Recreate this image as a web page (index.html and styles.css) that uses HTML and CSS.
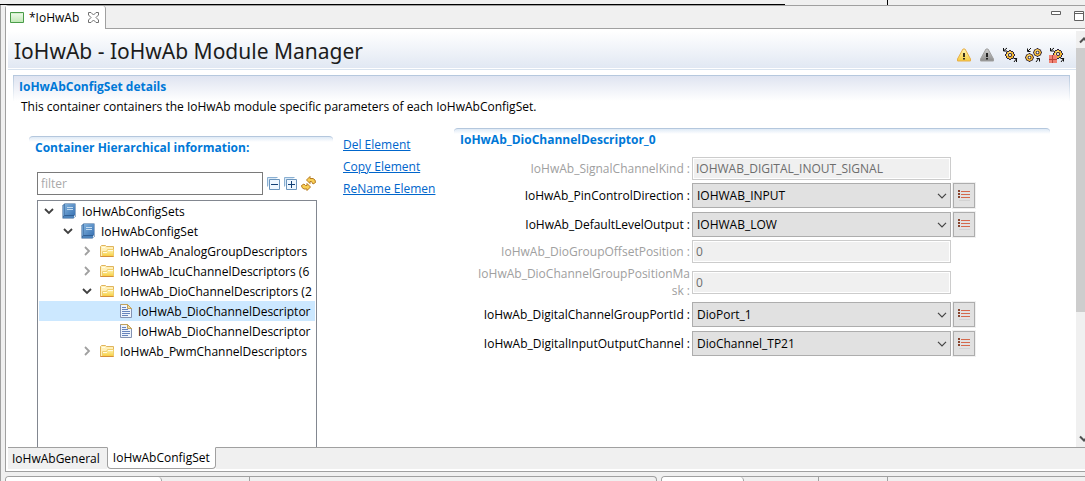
FILE: index.html
```html
<!DOCTYPE html>
<html lang="en">
<head>
<meta charset="utf-8">
<title>IoHwAb - IoHwAb Module Manager</title>
<link rel="stylesheet" href="styles.css">
</head>
<body>
<svg class="defs" width="0" height="0" aria-hidden="true">
  <defs>
    <linearGradient id="gold" x2="0" y2="1"><stop offset="0" stop-color="#fff6b8"/><stop offset="1" stop-color="#f6cc3c"/></linearGradient>
    <linearGradient id="grey" x2="0" y2="1"><stop offset="0" stop-color="#d0d0d0"/><stop offset="1" stop-color="#8c8c8c"/></linearGradient>
    <linearGradient id="blue" x2="1" y2="1"><stop offset="0" stop-color="#7fb0dc"/><stop offset="1" stop-color="#3b74b4"/></linearGradient>
    <linearGradient id="green" x2="0" y2="1"><stop offset="0" stop-color="#f3fbef"/><stop offset="1" stop-color="#bfe8b4"/></linearGradient>
    <symbol id="gear" viewBox="0 0 10 10">
      <path d="M4 0h2v1h2v1h1v2h1v2H9v2H8v1H6v1H4V9H2V8H1V6H0V4h1V2h1V1h2z" fill="#2e2440"/>
      <path d="M4 1h2v1h2v2h1v2H8v2H6v1H4V8H2V6H1V4h1V2h2z" fill="#f2b731"/>
      <path d="M3 2h3v1H4v1H3v2H2V4h1z" fill="#ffe27a"/>
      <circle cx="5" cy="5" r="2" fill="#2e2440"/><circle cx="5" cy="5" r="1.100" fill="#fff"/>
    </symbol>
    <symbol id="book" viewBox="0 0 14 16">
      <path d="M2.500.5h11v13l-2 2H.5v-13z" fill="#315f94"/>
      <path d="M3 1h10v11H3z" fill="url(#blue)"/><path d="M1 2.500L2.500 1v11L1 13.500z" fill="#6fa0d0"/>
      <path d="M2 13h10v2H1z" fill="#4d83bb"/><path d="M12 13l1-1v1.500L12 15z" fill="#e6edf4"/>
      <path d="M5 4.500h6M5 6.500h6" stroke="#c5dcf0"/>
    </symbol>
    <symbol id="folder" viewBox="0 0 15 13">
      <path d="M.5 11.500v-10l1-1h4l1 1h7v10z" fill="#fff0b8" stroke="#e0b45c"/>
      <path d="M2.500 11.500v-5h4l1-2h6v7z" fill="url(#gold)" stroke="#f0cf70"/>
      <path d="M.5 11.500h13" stroke="#d58f3c"/>
      <path d="M2 2.500h3M8 5.500h5M3 7.500h4" stroke="#fffbe6"/>
    </symbol>
    <symbol id="file" viewBox="0 0 12 14">
      <path d="M.5.5h7l4 4v9H.5z" fill="#eef4fc" stroke="#8392b2"/>
      <path d="M.5.5h7l4 4" fill="none" stroke="#c3a35b"/><path d="M7.500.5v4h4z" fill="#f3dda0" stroke="#c3a35b"/>
      <path d="M2 3.500h4M2 5.500h6M2 7.500h8M2 9.500h8M2 11.500h6" stroke="#6684bd"/>
    </symbol>
    <symbol id="open" viewBox="0 0 10 10"><path d="M1 3l4 4 4-4" fill="none" stroke="#404040" stroke-width="1.800"/></symbol>
    <symbol id="closed" viewBox="0 0 10 10"><path d="M3 1l4 4-4 4" fill="none" stroke="#a0a0a0" stroke-width="1.800"/></symbol>
    <symbol id="chev" viewBox="0 0 10 6"><path d="M1 .8l4 4 4-4" fill="none" stroke="#444" stroke-width="1.200"/></symbol>
    <symbol id="list" viewBox="0 0 12 11">
      <path d="M0 0h2v2H0zM0 3h2v2H0zM0 6h2v2H0z" fill="#88452f"/><path d="M3 1.500h9M3 4.500h9M3 7.500h9" stroke="#d4694c"/>
      <path d="M1 10.500h11" stroke="#d2d2d2"/>
    </symbol>
  </defs>
</svg>

<div class="top-strip"><span class="top-rule"></span><span class="top-mark"></span></div>
<div class="workbench">
  <main class="editor">
    <div class="tabs">
      <div class="tab">
        <svg width="14" height="11" viewBox="0 0 14 11"><path d="M.5.5h13v10H.5z" fill="url(#green)" stroke="#4a9d49"/><path d="M1.500 1.500h11" stroke="#d5f0cd"/></svg>
        <span>*IoHwAb</span>
        <button class="plain" aria-label="Close"><svg width="11" height="11" viewBox="0 0 11 11"><path d="M.5.5h2.500l2.500 2.500L8 .5h2.500V3L8 5.500 10.500 8v2.500H8L5.500 8 3 10.500H.5V8L3 5.500.5 3z" fill="#fff" stroke="#707070"/></svg></button>
      </div>
      <div class="window-buttons">
        <button class="plain" aria-label="Minimize"><svg width="10" height="10" viewBox="0 0 10 10"><path d="M.5.5h9v3h-9z" fill="#fff" stroke="#606060"/></svg></button>
        <button class="plain" aria-label="Maximize"><svg width="10" height="10" viewBox="0 0 10 10"><path d="M.5.5h9v9h-9zM.5 2.500h9" fill="#fff" stroke="#606060"/></svg></button>
      </div>
    </div>

    <div class="viewport">
      <div class="form">
        <header class="form-head">
          <h1>IoHwAb - IoHwAb Module Manager</h1>
          <div class="tools">
            <button class="plain" aria-label="Warnings"><svg width="16" height="16" viewBox="0 0 16 16"><path d="M7 2h2l5.500 10v2h-13v-2z" fill="url(#gold)" stroke="#e8ae48"/><path d="M7 6h2v4H7zM7 11h2v1.500H7z" fill="#38301c"/></svg></button>
            <button class="plain" aria-label="Ignored warnings"><svg width="16" height="16" viewBox="0 0 16 16"><path d="M7 2h2l5.500 10v2h-13v-2z" fill="url(#grey)" stroke="#a0a0a0"/><path d="M7 6h2v4H7zM7 11h2v1.500H7z" fill="#222"/></svg></button>
            <button class="plain" aria-label="Generate"><svg width="16" height="16" viewBox="0 0 16 16"><use href="#gear" x="3" y="3" width="10" height="10"/><path d="M5 1L2 3.500M1.500 1v3h3.500M15 11l-3 4M11.500 11.500h3v3.500" fill="none" stroke="#111"/></svg></button>
            <button class="plain" aria-label="Generate all"><svg width="17" height="16" viewBox="0 0 17 16"><use href="#gear" x="8" y="1" width="9" height="9"/><use href="#gear" x="0" y="6" width="9" height="9"/><path d="M6 1L3 4M2.500 1.500v3h3M14 11l-3 4M11.500 11.500h3v3" fill="none" stroke="#111"/></svg></button>
            <button class="plain" aria-label="Stop generation"><svg width="16" height="16" viewBox="0 0 16 16"><use href="#gear" x="4" y="2" width="10" height="10"/><path d="M5 1L2 3.500M1.500 1v3h3.500M15 11l-3 4M11.500 11.500h3v3" fill="none" stroke="#111"/><path d="M0 8h8v8H0z" fill="#f08374"/><path d="M3.500 8v8M0 12.500h8" stroke="#b94338"/></svg></button>
          </div>
        </header>

        <section class="outer">
          <h2 class="section-title outer-title">IoHwAbConfigSet details</h2>
          <p class="desc">This container containers the IoHwAb module specific parameters of each IoHwAbConfigSet.</p>
          <div class="columns">
            <section class="left">
              <h3 class="section-title">Container Hierarchical information:</h3>
              <div class="filter-row">
                <input type="text" class="filter" placeholder="filter" aria-label="filter">
                <button class="plain" aria-label="Collapse all"><svg width="13" height="13" viewBox="0 0 13 13"><path d="M.5 9.500v-9h10" fill="#d9e9f7" stroke="#8bb0d2"/><path d="M2.500 2.500h10v10h-10z" fill="#eef7ff" stroke="#6b95bd"/><path d="M4 7.500h7" stroke="#123f75"/></svg></button>
                <button class="plain" aria-label="Expand all"><svg width="13" height="13" viewBox="0 0 13 13"><path d="M.5 9.500v-9h10" fill="#d9e9f7" stroke="#8bb0d2"/><path d="M2.500 2.500h10v10h-10z" fill="#eef7ff" stroke="#6b95bd"/><path d="M4 7.500h7M7.500 4v7" stroke="#123f75"/></svg></button>
                <button class="plain" aria-label="Refresh"><svg width="15" height="15" viewBox="0 0 15 15"><path d="M9 .5L5.500 4 9 7.500V5.500h1.500L12 8l2.500-1.500-.5-2.500-2-1.500H9zM6 14.500L9.500 11 6 7.500v2H4.500L3 8 .5 9.500l.5 2L3 13h3z" fill="#f8cf55" stroke="#b67b22"/></svg></button>
              </div>
              <ul class="tree">
                <li><svg class="tw"><use href="#open"/></svg><svg class="book"><use href="#book"/></svg>IoHwAbConfigSets</li>
                <li class="l1"><svg class="tw"><use href="#open"/></svg><svg class="book"><use href="#book"/></svg>IoHwAbConfigSet</li>
                <li class="l2"><svg class="tw"><use href="#closed"/></svg><svg class="folder"><use href="#folder"/></svg>IoHwAb_AnalogGroupDescriptors</li>
                <li class="l2"><svg class="tw"><use href="#closed"/></svg><svg class="folder"><use href="#folder"/></svg>IoHwAb_IcuChannelDescriptors (6</li>
                <li class="l2"><svg class="tw"><use href="#open"/></svg><svg class="folder"><use href="#folder"/></svg>IoHwAb_DioChannelDescriptors (2</li>
                <li class="l3 selected"><svg class="file"><use href="#file"/></svg>IoHwAb_DioChannelDescriptor</li>
                <li class="l3"><svg class="file"><use href="#file"/></svg>IoHwAb_DioChannelDescriptor</li>
                <li class="l2"><svg class="tw"><use href="#closed"/></svg><svg class="folder"><use href="#folder"/></svg>IoHwAb_PwmChannelDescriptors</li>
              </ul>
            </section>
            <nav class="links">
              <a href="#del">Del Element</a>
              <a href="#copy">Copy Element</a>
              <a href="#rename">ReName Elemen</a>
            </nav>
            <section class="right">
              <h3 class="section-title">IoHwAb_DioChannelDescriptor_0</h3>
              <div class="fields">
                <label class="off" for="kind">IoHwAb_SignalChannelKind :</label>
                <input id="kind" type="text" value="IOHWAB_DIGITAL_INOUT_SIGNAL" disabled>
                <label for="dir">IoHwAb_PinControlDirection :</label>
                <div class="combo"><select id="dir"><option>IOHWAB_INPUT</option></select><svg><use href="#chev"/></svg></div>
                <button class="pick" aria-label="Options for pin control direction"><svg><use href="#list"/></svg></button>
                <label for="level">IoHwAb_DefaultLevelOutput :</label>
                <div class="combo"><select id="level"><option>IOHWAB_LOW</option></select><svg><use href="#chev"/></svg></div>
                <button class="pick" aria-label="Options for default level"><svg><use href="#list"/></svg></button>
                <label class="off" for="offset">IoHwAb_DioGroupOffsetPosition :</label>
                <input id="offset" type="text" value="0" disabled>
                <label class="off" for="mask">IoHwAb_DioChannelGroupPositionMa<br>sk :</label>
                <input id="mask" type="text" value="0" disabled>
                <label for="port">IoHwAb_DigitalChannelGroupPortId :</label>
                <div class="combo"><select id="port"><option>DioPort_1</option></select><svg><use href="#chev"/></svg></div>
                <button class="pick" aria-label="Options for port"><svg><use href="#list"/></svg></button>
                <label for="channel">IoHwAb_DigitalInputOutputChannel :</label>
                <div class="combo"><select id="channel"><option>DioChannel_TP21</option></select><svg><use href="#chev"/></svg></div>
                <button class="pick" aria-label="Options for channel"><svg><use href="#list"/></svg></button>
              </div>
            </section>
          </div>
        </section>
      </div>
      <div class="scrollbar">
        <svg viewBox="0 0 9 17"><path d="M4 11.500l4-4 4 4" fill="none" stroke="#505050" stroke-width="2"/></svg>
        <span class="thumb"></span><span class="track"></span>
        <svg viewBox="0 0 9 17"><path d="M4 6.500l4 4 4-4" fill="none" stroke="#505050" stroke-width="2"/></svg>
      </div>
    </div>

    <div class="pages">
      <button class="page">IoHwAbGeneral</button>
      <button class="page current">IoHwAbConfigSet</button>
      <span class="pages-rest"></span>
    </div>
  </main>
  <div class="lower">
    <div class="panel wide"><span class="ltab on"></span><span class="ltab"></span></div>
    <div class="panel"><span class="ltab on b"></span><span class="ltab c"></span><span class="ltab d"></span></div>
  </div>
</div>
</body>
</html>
```
FILE: styles.css
```css
* { box-sizing: border-box; }
body {
  margin: 0;
  height: 100vh;
  display: flex;
  flex-direction: column;
  overflow: hidden;
  background: #f0f0f0;
  color: #000;
  font: 12px/17px "Open Sans", "Noto Sans", sans-serif;
}
.defs { position: absolute; }
svg { display: block; flex: none; }
button, input, select { font: inherit; color: inherit; margin: 0; }
.plain { border: 0; padding: 0; background: none; display: block; }

.top-strip { display: flex; align-items: flex-end; height: 5px; flex: none; }
.top-rule { width: 785px; height: 1px; background: #000; }
.top-mark { width: 2px; height: 5px; margin-left: 101px; border-right: 1px solid #000; }

.workbench { flex: 1; min-height: 0; display: flex; flex-direction: column; border-left: 1px solid #a0a0a0; padding-left: 4px; }
.editor { flex: 1; min-height: 0; display: flex; flex-direction: column; background: #fff; border: 1px solid #a0a0a0; border-right: 0; border-top-left-radius: 4px; }
.tabs { flex: none; height: 23px; display: flex; justify-content: space-between; background: linear-gradient(#a0a0a0, #a0a0a0) bottom / 100% 1px no-repeat #f0f0f0; }
.tab { display: flex; align-items: center; gap: 5px; width: 100px; padding-left: 4px; background: #fff; border-right: 1px solid #a0a0a0; border-top-right-radius: 3px; }
.tab button { margin-left: 4px; }
.window-buttons { display: flex; align-items: flex-start; gap: 13px; padding: 5px 1px 0 0; }

.viewport { flex: 1; min-height: 0; display: flex; padding: 2px 0 0 2px; }
.form { flex: 1; min-width: 0; display: flex; flex-direction: column; overflow: hidden; }
.form-head { flex: none; display: flex; justify-content: space-between; align-items: center; height: 40px; padding: 0 11px 0 6px; background: linear-gradient(#fff, #e1e8f3 37px, #fff 37px, #fff 38px, #d8e3ef 38px, #d8e3ef 39px, #fff 39px); }
h1 { margin: 0; font: 21px/36px "Noto Sans", sans-serif; color: #1c1c1c; }
.tools { display: flex; gap: 7px; padding-top: 8px; }

.section-title { margin: 0; padding: 2px 6px 1px; font-size: 12px; line-height: 17px; font-weight: 700; color: #0078d7; white-space: nowrap; border-top: 1px solid #b4c7dd; border-radius: 4px 4px 0 0; background: linear-gradient(#dfeaf6, #fff 5px); }
.outer { flex: 1; min-height: 0; display: flex; flex-direction: column; margin: 4px 6px 0 5px; }
.outer-title { height: 26px; flex: none; border: 1px solid #b4c7dd; border-bottom: 0; padding-left: 5px; background: linear-gradient(#dfe4f1, #fff); border-image: linear-gradient(#b4c7dd, #fff) 1; }
.desc { margin: 0; padding: 0 8px; line-height: 12px; }
.columns { flex: 1; min-height: 0; display: flex; align-items: stretch; padding: 15px 20px 0 16px; }
.left { flex: none; width: 304px; margin-top: 8px; display: flex; flex-direction: column; }
.filter-row { display: flex; align-items: center; gap: 4px; padding: 15px 0 5px 8px; }
.filter { width: 226px; height: 23px; border: 1px solid #7a7a7a; padding: 0 3px; outline: 0; background: #fff; }
.filter::placeholder { color: #a9a9a9; opacity: 1; }
.tree { flex: 1; min-height: 0; list-style: none; margin: 0 16px 0 8px; padding: 0 1px; border: 1px solid #828790; border-bottom: 0; overflow: hidden; white-space: nowrap; }
.tree li { display: flex; align-items: center; height: 20px; padding-left: 5px; overflow: hidden; }
.tree .l1 { padding-left: 24px; }
.tree .l2 { padding-left: 43px; }
.tree .l3 { padding-left: 81px; }
.tree .selected { background: #cce8ff; }
.tw { width: 10px; height: 10px; margin-right: 8px; }
.book { width: 14px; height: 16px; margin-right: 6px; }
.folder { width: 15px; height: 13px; margin-right: 5px; }
.file { width: 12px; height: 14px; margin-right: 6px; }

.links { flex: none; margin: 8px 0 0 10px; width: 111px; display: flex; flex-direction: column; align-items: flex-start; gap: 5px; white-space: nowrap; }
.links a { color: #0066cc; text-decoration: underline; }

.right { flex: 1; min-width: 0; }
.fields { display: grid; grid-template-columns: 236px 259px 22px; column-gap: 2px; row-gap: 2px; align-items: center; padding-top: 8px; }
.fields label { grid-column: 1; text-align: right; white-space: nowrap; }
.fields .off { color: #a0a0a0; }
.fields input { width: 259px; height: 23px; padding: 0 3px; border: 1px solid #ccc; background: #f0f0f0; color: #6d6d6d; box-shadow: inset 0 0 0 1px #fff; }
.combo { display: grid; align-items: center; height: 27px; }
.combo select { grid-area: 1 / 1; appearance: none; width: 100%; height: 25px; padding: 0 20px 0 4px; border: 1px solid #adadad; border-radius: 0; background: #e1e1e1; }
.combo svg { grid-area: 1 / 1; justify-self: end; width: 10px; height: 6px; margin-right: 4px; pointer-events: none; }
.pick { display: grid; place-items: center; height: 25px; padding: 0; border: 1px solid #adadad; background: #e1e1e1; outline: 1px solid #f0f0f0; }
.pick svg { width: 12px; height: 11px; }

.scrollbar { flex: none; width: 9px; display: flex; flex-direction: column; background: #f0f0f0; }
.scrollbar svg { width: 9px; height: 17px; }
.thumb { flex: 264; background: #cdcdcd; }
.track { flex: 118; }

.pages { flex: none; display: flex; height: 24px; padding: 0 0 2px 2px; }
.page { border: 0; border-top: 1px solid #a0a0a0; padding: 0 7px 1px 4px; background: #f0f0f0; }
.page.current { background: #fff; border: 1px solid #a0a0a0; border-top-color: #fff; border-radius: 0 0 4px 4px; padding: 0 5px 1px; }
.pages-rest { flex: 1; border-top: 1px solid #a0a0a0; background: #f0f0f0; }

.lower { flex: none; display: flex; gap: 4px; height: 9px; padding-top: 4px; }
.panel { flex: 1; display: flex; border: 1px solid #a0a0a0; border-width: 1px 0 0 1px; border-radius: 4px 0 0 0; overflow: hidden; }
.wide { flex: none; width: 652px; border-right-width: 1px; border-top-right-radius: 4px; }
.ltab { width: 88px; border-right: 1px solid #a0a0a0; }
.ltab.on { width: 156px; background: #fff; border-top-right-radius: 4px; }
.ltab.b { width: 82px; }
.ltab.c { width: 75px; }
.ltab.d { width: 69px; }
```
